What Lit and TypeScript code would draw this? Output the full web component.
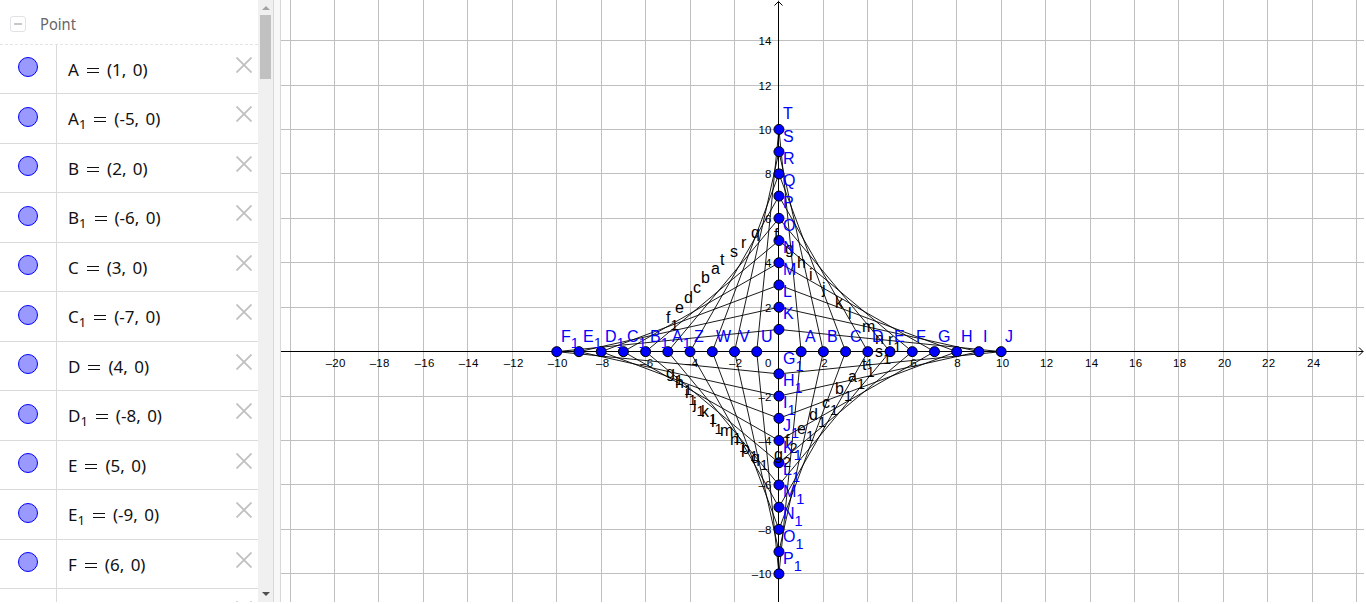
import { LitElement, html, svg, css, nothing } from "lit";
import { customElement, property } from "lit/decorators.js";

const OX = 778.95 - 281;
const OY = 351.65;
const UNIT = 22.22;
const WIDTH = 1083;
const HEIGHT = 602;

const px = (x: number) => OX + x * UNIT;
const py = (y: number) => OY - y * UNIT;

type Label = [name: string, sub: string, x: number, y: number];

// Points on the axes, in plane coordinates
const points: Label[] = [];
"A B C D E F G H I J".split(" ").forEach((n, i) => points.push([n, "", i + 1, 0]));
"K L M N O P Q R S T".split(" ").forEach((n, i) => points.push([n, "", 0, i + 1]));
"U V W Z A1 B1 C1 D1 E1 F1".split(" ").forEach((n, i) => points.push([n[0], n[1] ?? "", -i - 1, 0]));
"G H I J K L M N O P".split(" ").forEach((n, i) => points.push([n, "1", 0, -i - 1]));

// Segment captions, in canvas pixels (left edge, baseline)
const captions: Label[] = [
  ["f", "", 493, 240], ["g", "", 504, 254], ["h", "", 516, 268], ["i", "", 528, 280],
  ["j", "", 541, 294], ["k", "", 554, 308], ["l", "", 567, 319], ["m", "", 581, 332],
  ["n", "", 594, 344], ["r", "1", 607, 345],
  ["q", "", 470, 238], ["r", "", 460, 248], ["s", "", 449, 257], ["t", "", 439, 265],
  ["a", "", 430, 274], ["b", "", 420, 283], ["c", "", 412, 293], ["d", "", 403, 303],
  ["e", "", 394, 313], ["f", "1", 385, 323],
  ["g", "1", 385, 378], ["h", "1", 394, 388], ["i", "1", 404, 398], ["j", "1", 412, 409],
  ["k", "1", 420, 417], ["l", "1", 430, 427], ["m", "1", 439, 436], ["n", "1", 449, 445],
  ["p", "1", 460, 454], ["q", "1", 470, 463],
  ["s", "1", 594, 357], ["t", "1", 581, 370], ["a", "1", 567, 382], ["b", "1", 554, 394],
  ["c", "1", 541, 408], ["d", "1", 528, 420], ["e", "1", 516, 434], ["f", "2", 504, 446],
  ["g", "2", 493, 460],
];

const range = (from: number, to: number, step: number) => {
  const out: number[] = [];
  for (let v = from; v <= to; v += step) out.push(v);
  return out;
};

@customElement("graphics-view")
class GraphicsView extends LitElement {
  static styles = css`
    :host { display: block; }
    svg { display: block; font-family: "Liberation Sans", Arial, sans-serif; }
    .grid { stroke: #c0c0c0; stroke-width: 1; shape-rendering: crispEdges; }
    .axis { stroke: #000; stroke-width: 1; fill: none; }
    .tick { font-size: 11.5px; letter-spacing: 0.3px; fill: #000; }
    .segment { stroke: #000; stroke-width: 0.9; }
    .point { fill: #00f; stroke: #000; stroke-width: 1; }
    .caption { font-size: 16px; fill: #000; }
    .name { font-size: 16px; fill: #00f; }
    .sub { font-size: 14.5px; }
  `;

  private label(cls: string, [name, sub, x, y]: Label, drop: number) {
    return svg`<text class=${cls} x=${x} y=${y}>${name}${sub ? svg`<tspan class="sub" dy=${drop}>${sub}</tspan>` : nothing}</text>`;
  }

  render() {
    const col = (x: number) => Math.floor(px(x)) + 0.5;
    const row = (y: number) => Math.floor(py(y)) + 0.5;
    const ax = col(0);
    const ay = row(0);
    const signs = [[1, 1], [-1, 1], [-1, -1], [1, -1]];
    const minus = (v: number) => (v < 0 ? "–" + -v : String(v));
    return html`<svg width=${WIDTH} height=${HEIGHT} viewBox="0 0 ${WIDTH} ${HEIGHT}">
      ${range(-22, 26, 2).map((x) => svg`<line class="grid" x1=${col(x)} x2=${col(x)} y1="0" y2=${HEIGHT}></line>`)}
      ${range(-10, 14, 2).map((y) => svg`<line class="grid" x1="0" x2=${WIDTH} y1=${row(y)} y2=${row(y)}></line>`)}
      <path class="axis" d="M0 ${ay}H${WIDTH - 1}M${WIDTH - 5} ${ay - 4}l4 4l-4 4M${ax} ${HEIGHT}V2M${ax - 4} 5.5l4 -4l4 4"></path>
      ${range(-20, 24, 2).filter((x) => x !== 0).map(
        (x) => svg`<text class="tick" text-anchor="middle" x=${col(x) + 1.2} y="367">${minus(x)}</text>`
      )}
      <text class="tick" x="484" y="367">0</text>
      ${range(-10, 14, 2).filter((y) => y !== 0).map(
        (y) => svg`<text class="tick" text-anchor="end" x=${ax - 6.7} y=${row(y) + 4.5}>${minus(y)}</text>`
      )}
      ${signs.map(([sx, sy]) => range(1, 10, 1).map(
        (k) => svg`<line class="segment" x1=${px(sx * k)} y1=${py(0)} x2=${px(0)} y2=${py(sy * (11 - k))}></line>`
      ))}
      ${points.map(([, , x, y]) => svg`<circle class="point" cx=${px(x)} cy=${py(y)} r="5"></circle>`)}
      ${captions.map((c) => this.label("caption", c, 7))}
      ${points.map(([n, s, x, y]) => this.label("name", [n, s, Math.round(px(x) + 4), Math.round(py(y) - 10)], x ? 6 : 7))}
    </svg>`;
  }
}

@customElement("algebra-row")
class AlgebraRow extends LitElement {
  @property() name = "";
  @property() sub = "";
  @property() value = "";

  static styles = css`
    :host {
      display: flex; box-sizing: border-box; height: 49.5px; flex: none;
      border-bottom: 1px solid #dadada; background: #fff;
    }
    .marble {
      box-sizing: border-box; width: 57px; flex: none; border-right: 1px solid #dadada;
      padding: 12.5px 0 0 18px;
    }
    .dot { box-sizing: border-box; width: 20px; height: 20px; border-radius: 50%; background: #99f; border: 1px solid #00f; }
    .text {
      flex: 1; display: flex; align-items: baseline; padding: 12px 0 0 11px; white-space: pre;
      font: 17px/26px "Noto Sans", "Open Sans", sans-serif; color: #111;
    }
    .sub { font-size: 13px; line-height: 13px; position: relative; top: 4px; }
    .eq { margin: 0 7px; width: 14px; overflow: visible; flex: none; }
    .value { word-spacing: 2px; }
    .close { width: 16px; height: 16px; flex: none; margin: 12.2px 6px 0 0; }
    .close path { stroke: #c0c0c0; stroke-width: 1.8; }
    .eq path { stroke: #111; stroke-width: 1; }
  `;

  render() {
    return html`
      <div class="marble"><div class="dot"></div></div>
      <div class="text"><span>${this.name}</span>${this.sub ? html`<span class="sub">${this.sub}</span>` : nothing}<svg class="eq" width="14" height="9" viewBox="0 0 14 9"><path d="M1 1.5H13M1 5.5H13"></path></svg><span class="value">${this.value}</span></div>
      <svg class="close" viewBox="0 0 16 16"><path d="M.5 .5L15.5 15.5M15.5 .5L.5 15.5"></path></svg>
    `;
  }
}

@customElement("app-root")
class AppRoot extends LitElement {
  static styles = css`
    :host { display: flex; height: 604px; background: #fff; overflow: hidden; }
    .view { display: flex; height: 602px; overflow: hidden; }
    .list { width: 258px; display: flex; flex-direction: column; overflow: hidden; }
    .head {
      box-sizing: border-box; height: 44.5px; flex: none; display: flex; align-items: center;
      padding: 5px 0 0 10px; border-bottom: 1px dashed #e4e4e4; gap: 14px;
    }
    .fold {
      box-sizing: border-box; width: 16px; height: 16px; border: 1px solid #e2e2e6; border-radius: 3px;
      display: flex; align-items: center; justify-content: center;
    }
    .fold i { width: 8px; height: 2px; background: #c8c8c8; }
    .title { font-size: 17px; font-family: "Noto Sans", sans-serif; fill: #666; }
    .scroll {
      box-sizing: border-box; width: 15px; background: #f0f0f0; display: flex; flex-direction: column;
      align-items: center; padding: 6px 0 6px;
    }
    .thumb { width: 11px; height: 64px; background: #c1c1c1; margin: 5px 0 auto; flex: none; }
    .scroll svg { flex: none; }
    .up { fill: #a3a3a3; }
    .down { fill: #505050; }
    .split { box-sizing: border-box; width: 8px; background: #f8f8f8; border: solid #d8d8d8; border-width: 0 1px; }
  `;

  render() {
    const rows = [
      ["A", "", "(1, 0)"], ["A", "1", "(-5, 0)"], ["B", "", "(2, 0)"], ["B", "1", "(-6, 0)"],
      ["C", "", "(3, 0)"], ["C", "1", "(-7, 0)"], ["D", "", "(4, 0)"], ["D", "1", "(-8, 0)"],
      ["E", "", "(5, 0)"], ["E", "1", "(-9, 0)"], ["F", "", "(6, 0)"], ["", "", ""],
    ];
    return html`<div class="view">
      <div class="list">
        <div class="head">
          <div class="fold"><i></i></div>
          <svg width="60" height="24"><text class="title" x="0" y="18" textLength="36" lengthAdjust="spacingAndGlyphs">Point</text></svg>
        </div>
        ${rows.map(([n, s, v]) => html`<algebra-row .name=${n} .sub=${s} .value=${v}></algebra-row>`)}
      </div>
      <div class="scroll">
        <svg class="up" width="8" height="4"><path d="M0 4L4 0L8 4Z"></path></svg>
        <div class="thumb"></div>
        <svg class="down" width="8" height="4"><path d="M0 0L4 4L8 0Z"></path></svg>
      </div>
      <div class="split"></div>
      <graphics-view></graphics-view>
    </div>`;
  }
}
